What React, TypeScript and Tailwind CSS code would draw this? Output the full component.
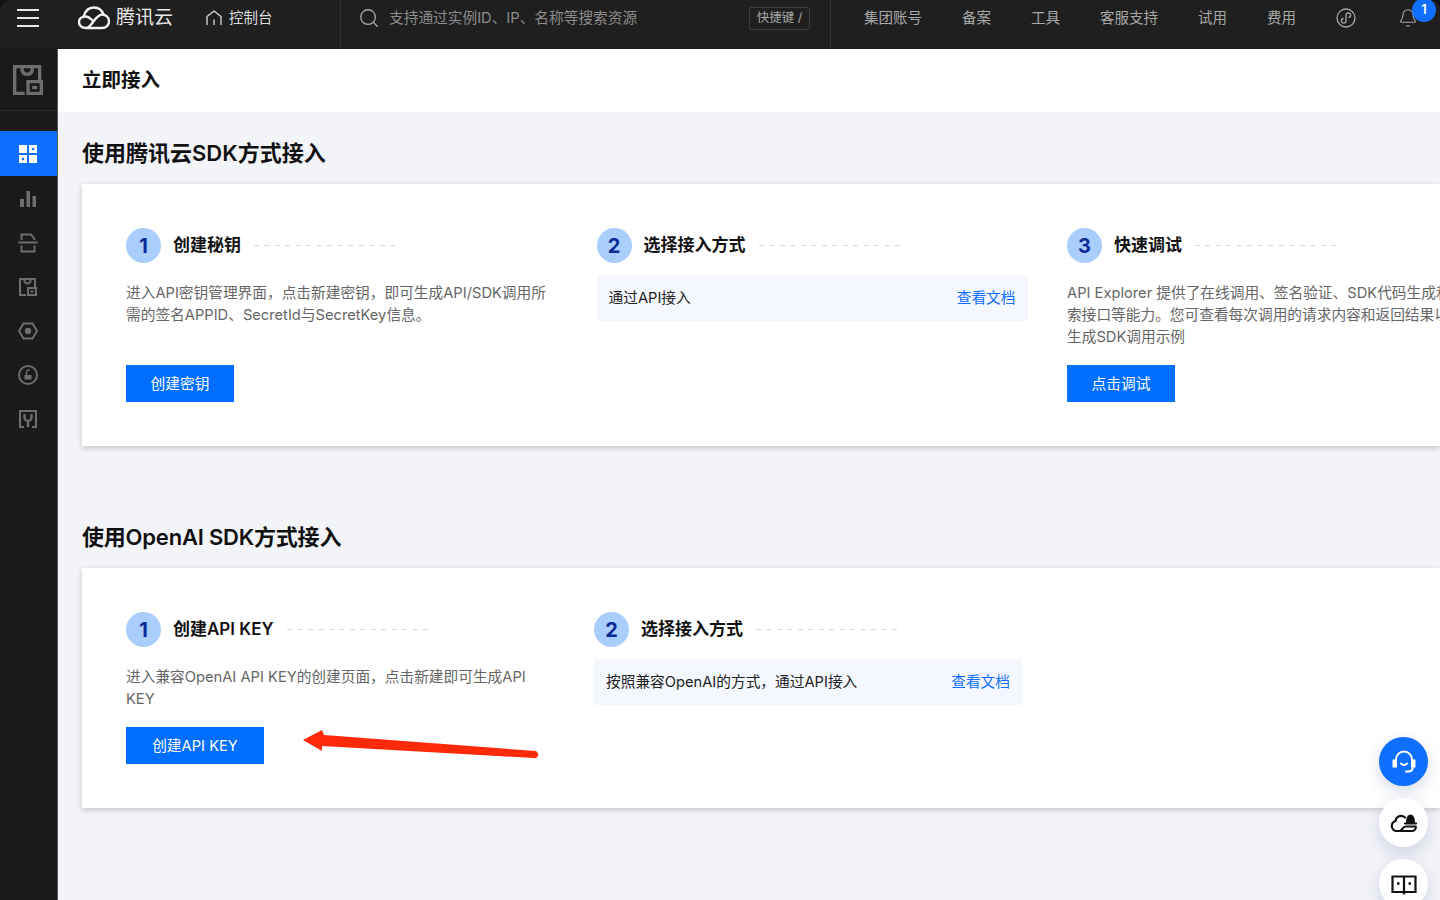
import { Bell, Search } from "lucide-react";

const font = "font-['Inter','Noto_Sans_CJK_SC',sans-serif]";
const comma = "\uFF0C";

function Logo() {
  return (
    <svg width="32" height="24" viewBox="0 0 32 24" fill="none" stroke="#f2f2f2" strokeWidth="2.4" strokeLinecap="round">
      <path d="M5.500 11C7 5 11 1.500 16 1.500c4.500 0 8 3 9.500 7" />
      <path d="M8 22h16c4 0 7-3 7-6.500 0-4-3-7-7-7C17.500 8.500 13.500 22 8 22c-4 0-7-2.500-7-6 0-3.500 3-5.500 6.500-5.500 3 0 5 2 7 4" />
    </svg>
  );
}

function BoxIcon({ size = 18 }: { size?: number }) {
  return (
    <svg width={size} height={size} viewBox="0 0 18 18" fill="none" stroke="#6e6e6e" strokeWidth="2">
      <path d="M7 17H1V1h15v8" />
      <path d="M5.500 1v2.500a3.200 3.200 0 0 0 6 0V1" />
      <path d="M9 10h8v7H9z" />
      <path d="M11.500 13.500h3" />
    </svg>
  );
}

function DashIcon() {
  return (
    <svg width="18" height="18" viewBox="0 0 18 18">
      <path fill="#fff" d="M0 0h8v8H0zM10 0h8v8h-8zM0 10h8v8H0zM10 10h8v8h-8z" />
      <circle cx="14" cy="4" r="1.300" fill="#0f6fff" />
      <circle cx="4" cy="14" r="1.300" fill="#0f6fff" />
    </svg>
  );
}

function BarsIcon() {
  return (
    <svg width="18" height="18" viewBox="0 0 18 18" fill="#6e6e6e">
      <path d="M1 9h4v8H1zM7.500 1h3.500v16H7.500zM13.500 6H17v11h-3.500z" />
    </svg>
  );
}

function ScanIcon() {
  return (
    <svg width="20" height="20" viewBox="0 0 20 20" fill="none" stroke="#6e6e6e" strokeWidth="2">
      <path d="M3.500 7V1.500h9.500L16.500 6v1" />
      <path d="M0.500 9.500h19" />
      <path d="M3.500 12.500v6h13v-6" />
    </svg>
  );
}

function HexIcon() {
  return (
    <svg width="20" height="18" viewBox="0 0 20 18" fill="none" stroke="#6e6e6e" strokeWidth="2">
      <path d="M5.500 1.500h9L19 9l-4.500 7.500h-9L1 9z" />
      <circle cx="10" cy="9" r="3.200" fill="#6e6e6e" stroke="none" />
    </svg>
  );
}

function LockIcon() {
  return (
    <svg width="20" height="20" viewBox="0 0 20 20" fill="none" stroke="#6e6e6e" strokeWidth="2">
      <circle cx="10" cy="10" r="9" />
      <path d="M8.500 10V6.500a1.800 1.800 0 0 1 3-1" strokeWidth="1.500" />
      <path d="M6.500 10h7v4.500h-7z" fill="#6e6e6e" stroke="none" />
    </svg>
  );
}

function ToolIcon() {
  return (
    <svg width="18" height="18" viewBox="0 0 18 18" fill="none" stroke="#6e6e6e" strokeWidth="2">
      <path d="M5 17H1V1h16v16h-4" />
      <path d="M5.500 4v3.500a3.500 3.500 0 0 0 7 0V4M9 10v7" strokeWidth="2.400" />
    </svg>
  );
}

function MiniProgram() {
  return (
    <svg width="20" height="20" viewBox="0 0 20 20" fill="none" stroke="#a8a8a8" strokeWidth="1.300">
      <circle cx="10" cy="10" r="9" />
      <path d="M7.500 10.500a2.300 2.300 0 1 0 2.500 2.300V7.200a2.300 2.300 0 1 1 2.500 2.300" />
    </svg>
  );
}

function Headset() {
  return (
    <svg width="28" height="28" viewBox="0 0 28 28" fill="none" stroke="#fff" strokeWidth="2" strokeLinecap="round">
      <path d="M6 13.500v-2a8 8 0 0 1 16 0v2" />
      <path d="M3.500 12.500H6v6H3.500zM22 12.500h2.500v6H22z" fill="#fff" />
      <path d="M11 15.500c1.500 2 4.500 2 6 0" />
      <path d="M23 18.500c0 3-1.500 5-5 5h-2" />
    </svg>
  );
}

function CloudBell() {
  return (
    <svg width="28" height="28" viewBox="0 0 28 28" fill="none" stroke="#111" strokeWidth="2.200" strokeLinecap="round">
      <path d="M15 8.500c-4-3.500-9-1-9.500 3.500C3 12.800 1.800 15 1.800 17c0 3 2.400 5 5 5H22c2.200 0 3.800-1.800 3.800-4" />
      <path d="M10 22c2.500-1 3-4.500 5.500-4.500h10" />
      <path d="M16 14c0-5 1.500-8.500 4.500-8.500S25 9 25 14z" fill="#111" stroke="none" />
      <path d="M15 14.500h11" />
    </svg>
  );
}

function BookIcon() {
  return (
    <svg width="28" height="28" viewBox="0 0 28 28" fill="none" stroke="#111" strokeWidth="2.200">
      <path d="M14 6.500H2.500v15.500H14zM14 6.500h11.500v15.500H14z" />
      <path d="M7 13.500h2.500M18.500 13.500H21" strokeWidth="2.600" />
      <path d="M11.500 22l2.500 3 2.500-3z" fill="#111" stroke="none" />
    </svg>
  );
}

function Step({ num, title }: { num: number; title: string }) {
  return (
    <div className="flex h-[35px] items-center">
      <span className="flex h-[35px] w-[35px] shrink-0 items-center justify-center rounded-full bg-[#a9cdfd] text-[20px] font-bold text-[#0a2a96]">
        {num}
      </span>
      <span className="ml-3 whitespace-nowrap text-[17px] font-semibold text-[#111]">{title}</span>
      <span className="ml-[13px] h-px w-[143px] bg-[repeating-linear-gradient(90deg,#d4d4d4_0_5px,transparent_5px_10.500px)]" />
    </div>
  );
}

function Desc({ text }: { text: string }) {
  return <p className="-mb-px pt-[19px] text-[14.700px] leading-[22px] text-[#666]">{text}</p>;
}

function Btn({ label, width }: { label: string; width: string }) {
  return (
    <button className={`mt-[18px] block h-[37px] bg-[#006eff] pt-px text-[14.700px] text-white ${width}`}>{label}</button>
  );
}

function AccessRow({ text }: { text: string }) {
  return (
    <div className="mt-3 flex h-[46px] items-center justify-between bg-[#f4f7fd] px-3 pt-px text-[14.700px]">
      <span className="text-[#222]">{text}</span>
      <span className="text-[#0f6fff]">查看文档</span>
    </div>
  );
}

const sideIcons = [<BarsIcon />, <ScanIcon />, <BoxIcon />, <HexIcon />, <LockIcon />, <ToolIcon />];
const navItems = ["集团账号", "备案", "工具", "客服支持", "试用", "费用"];

export default function App() {
  return (
    <div className={`relative flex h-[900px] w-[1440px] flex-col overflow-hidden bg-[#111] ${font}`}>
      <header className="flex h-[49px] shrink-0 rounded-t-[10px] bg-[#1f1f1f]">
        <div className="flex h-9 w-[340px] shrink-0 items-center pl-[17px]">
          <span className="flex w-[22px] flex-col gap-[6px]">
            <span className="h-[2px] bg-[#e8e8e8]" />
            <span className="h-[2px] bg-[#e8e8e8]" />
            <span className="h-[2px] bg-[#e8e8e8]" />
          </span>
          <span className="ml-[39px]">
            <Logo />
          </span>
          <span className="ml-[6px] text-[19px] text-[#e8e8e8]">腾讯云</span>
          <svg className="ml-[33px]" width="16" height="16" viewBox="0 0 16 16" fill="none" stroke="#ddd" strokeWidth="1.300">
            <path d="M1 15V6.500L8 1l7 5.500V15M8 9.500V15" />
          </svg>
          <span className="ml-[7px] text-[14.500px] text-[#ddd]">控制台</span>
        </div>
        <div className="flex w-[491px] shrink-0 border-x border-[#333]">
          <div className="flex h-9 w-full items-center pl-[17px] pr-5">
            <Search size={22} strokeWidth={1.400} className="text-[#aaa]" />
            <span className="ml-[9px] flex-1 text-[14.700px] text-[#8c8c8c]">支持通过实例ID、IP、名称等搜索资源</span>
            <span className="flex h-[23px] w-[61px] items-center justify-center rounded-[2px] border border-[#3d3d3d] text-[12.500px] text-[#a8a8a8]">
              快捷键 /
            </span>
          </div>
        </div>
        <nav className="flex h-9 flex-1 items-center gap-10 pl-[33px] text-[14.500px] text-[#a8a8a8]">
          {navItems.map((item) => (
            <span key={item} className="whitespace-nowrap">
              {item}
            </span>
          ))}
          <MiniProgram />
          <span className="relative ml-[2px]">
            <Bell size={20} strokeWidth={1.300} className="text-[#a8a8a8]" />
            <span className="absolute -right-[18px] -top-[10px] flex h-6 w-6 items-center justify-center rounded-full bg-[#0f6fff] text-[13px] font-semibold text-white">
              1
            </span>
          </span>
        </nav>
      </header>

      <div className="flex min-h-0 flex-1">
        <aside className="w-[58px] shrink-0 border-r border-[#5a5a5a] bg-[#1a1a1a]">
          <div className="flex h-[62px] items-center justify-center border-b border-[#2d2d2d] pr-px">
            <BoxIcon size={30} />
          </div>
          <div className="mt-[20px] flex flex-col">
            <div className="flex h-[45px] items-center justify-center bg-[#0f6fff] pr-px">
              <DashIcon />
            </div>
            {sideIcons.map((icon, i) => (
              <div key={i} className="flex h-[44px] items-center justify-center pr-px pt-[2px]">
                {icon}
              </div>
            ))}
          </div>
        </aside>

        <main className="min-w-0 flex-1 bg-[#f3f4f8]">
          <div className="flex h-[63px] items-center bg-white px-6 text-[19.500px] font-semibold text-[#111]">立即接入</div>
          <div className="pl-6">
            <h2 className="flex h-[72px] items-center pt-[10px] text-[22px] font-semibold text-[#111]">使用腾讯云SDK方式接入</h2>
            <section className="bg-white pl-11 pt-11 pb-11 shadow-[0_2px_6px_rgba(0,0,0,0.2)]">
              <div className="flex gap-[39.500px]">
                <div className="w-[431px] shrink-0">
                  <Step num={1} title="创建秘钥" />
                  <div className="min-h-[84px]">
                    <Desc text={`进入API密钥管理界面${comma}点击新建密钥${comma}即可生成API/SDK调用所需的签名APPID、SecretId与SecretKey信息。`} />
                  </div>
                  <Btn label="创建密钥" width="w-[108px]" />
                </div>
                <div className="w-[431px] shrink-0">
                  <Step num={2} title="选择接入方式" />
                  <AccessRow text="通过API接入" />
                </div>
                <div className="w-[431px] shrink-0">
                  <Step num={3} title="快速调试" />
                  <div className="min-h-[84px]">
                    <Desc text="API Explorer 提供了在线调用、签名验证、SDK代码生成和快速检索接口等能力。您可查看每次调用的请求内容和返回结果以及自动生成SDK调用示例" />
                  </div>
                  <Btn label="点击调试" width="w-[108px]" />
                </div>
              </div>
            </section>

            <h2 className="mt-[50px] flex h-[72px] items-center pt-[10px] text-[22px] font-semibold tracking-[-0.200px] text-[#111]">
              使用OpenAI SDK方式接入
            </h2>
            <section className="bg-white pl-11 pt-11 pb-11 shadow-[0_2px_6px_rgba(0,0,0,0.2)]">
              <div className="flex gap-10">
                <div className="w-[428px] shrink-0">
                  <Step num={1} title="创建API KEY" />
                  <div className="w-[415px]">
                    <Desc text={`进入兼容OpenAI API KEY的创建页面${comma}点击新建即可生成API KEY`} />
                  </div>
                  <Btn label="创建API KEY" width="w-[138px]" />
                </div>
                <div className="w-[428px] shrink-0">
                  <Step num={2} title="选择接入方式" />
                  <AccessRow text={`按照兼容OpenAI的方式${comma}通过API接入`} />
                </div>
              </div>
            </section>
          </div>
        </main>
      </div>

      {/* annotation arrow drawn over the page */}
      <svg className="absolute left-[300px] top-[725px]" width="242" height="40" viewBox="0 0 242 40">
        <path fill="#ff2a0a" d="M3 15 L22 5 L24 10 L236 26 Q239 28 238 31 Q236 34 233 33 L22 21 L22 26z" />
      </svg>

      <div className="absolute left-[1379px] top-[737px] flex flex-col gap-3">
        <span className="flex h-[49px] w-[49px] items-center justify-center rounded-full bg-[#0f6fff] shadow-[0_6px_16px_rgba(30,60,120,0.18)]">
          <Headset />
        </span>
        <span className="flex h-[49px] w-[49px] items-center justify-center rounded-full bg-white shadow-[0_6px_16px_rgba(30,60,120,0.18)]">
          <CloudBell />
        </span>
        <span className="flex h-[49px] w-[49px] items-center justify-center rounded-full bg-white shadow-[0_6px_16px_rgba(30,60,120,0.18)]">
          <BookIcon />
        </span>
      </div>
    </div>
  );
}
